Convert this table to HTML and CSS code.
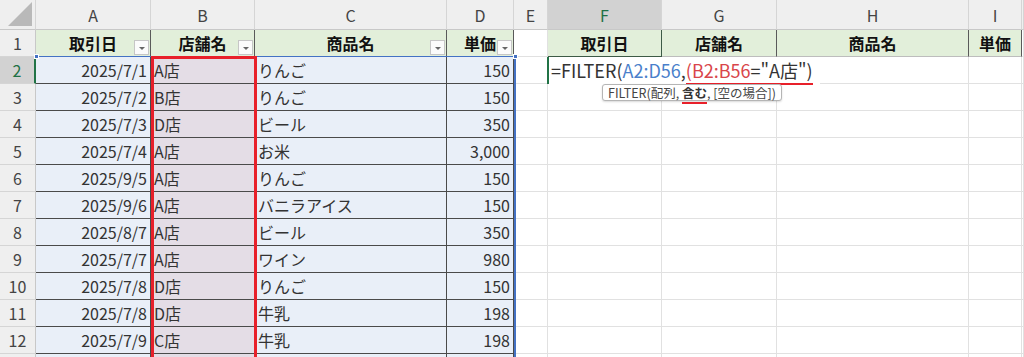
FILE: index.html
```html
<!DOCTYPE html>
<html lang="ja">
<head>
<meta charset="utf-8">
<link rel="stylesheet" href="styles.css">
</head>
<body>
<div class="sheet">
<table class="grid">
<colgroup>
<col class="c-rh"><col class="c-a"><col class="c-b"><col class="c-c"><col class="c-d"><col class="c-e"><col class="c-f"><col class="c-g"><col class="c-h"><col class="c-i"><col class="c-j">
</colgroup>
<tr class="colhead">
<td class="corner"><span class="tri"></span></td><td>A</td><td>B</td><td>C</td><td>D</td><td>E</td><td class="sel">F</td><td>G</td><td>H</td><td>I</td><td></td>
</tr>
<tr>
<td class="rh">1</td>
<td class="th">取引日<span class="dd"></span></td>
<td class="th">店舗名<span class="dd"></span></td>
<td class="th">商品名<span class="dd"></span></td>
<td class="th">単価<span class="dd"></span></td>
<td></td>
<td class="th2 f1">取引日</td><td class="th2">店舗名</td><td class="th2">商品名</td><td class="th2">単価</td><td></td>
</tr>
<tr>
<td class="rh rsel">2</td><td class="d num">2025/7/1</td><td class="d s">A店</td><td class="d">りんご</td><td class="d num">150</td><td></td><td class="nob"></td><td class="nob"></td><td></td><td></td><td></td>
</tr>
<tr>
<td class="rh">3</td><td class="d num">2025/7/2</td><td class="d s">B店</td><td class="d">りんご</td><td class="d num">150</td><td></td><td></td><td></td><td></td><td></td><td></td>
</tr>
<tr>
<td class="rh">4</td><td class="d num">2025/7/3</td><td class="d s">D店</td><td class="d">ビール</td><td class="d num">350</td><td></td><td></td><td></td><td></td><td></td><td></td>
</tr>
<tr>
<td class="rh">5</td><td class="d num">2025/7/4</td><td class="d s">A店</td><td class="d">お米</td><td class="d num">3,000</td><td></td><td></td><td></td><td></td><td></td><td></td>
</tr>
<tr>
<td class="rh">6</td><td class="d num">2025/9/5</td><td class="d s">A店</td><td class="d">りんご</td><td class="d num">150</td><td></td><td></td><td></td><td></td><td></td><td></td>
</tr>
<tr>
<td class="rh">7</td><td class="d num">2025/9/6</td><td class="d s">A店</td><td class="d">バニラアイス</td><td class="d num">150</td><td></td><td></td><td></td><td></td><td></td><td></td>
</tr>
<tr>
<td class="rh">8</td><td class="d num">2025/8/7</td><td class="d s">A店</td><td class="d">ビール</td><td class="d num">350</td><td></td><td></td><td></td><td></td><td></td><td></td>
</tr>
<tr>
<td class="rh">9</td><td class="d num">2025/7/7</td><td class="d s">A店</td><td class="d">ワイン</td><td class="d num">980</td><td></td><td></td><td></td><td></td><td></td><td></td>
</tr>
<tr>
<td class="rh">10</td><td class="d num">2025/7/8</td><td class="d s">D店</td><td class="d">りんご</td><td class="d num">150</td><td></td><td></td><td></td><td></td><td></td><td></td>
</tr>
<tr>
<td class="rh">11</td><td class="d num">2025/7/8</td><td class="d s">D店</td><td class="d">牛乳</td><td class="d num">198</td><td></td><td></td><td></td><td></td><td></td><td></td>
</tr>
<tr>
<td class="rh">12</td><td class="d num">2025/7/9</td><td class="d s">C店</td><td class="d">牛乳</td><td class="d num">198</td><td></td><td></td><td></td><td></td><td></td><td></td>
</tr>
<tr>
<td class="rh"></td><td class="d num"></td><td class="d s"></td><td class="d"></td><td class="d num"></td><td></td><td></td><td></td><td></td><td></td><td></td>
</tr>
</table>

<div class="range-blue"><span class="h h-l"></span><span class="h h-r"></span></div>
<div class="range-red"></div>

<div class="editor"><span class="k">=FILTER(</span><span class="rb">A2:D56</span><span class="k">,</span><span class="ul"><span class="rr">(B2:B56</span><span class="k">=&quot;A店&quot;)</span></span></div>

<div class="tip">FILTER(配列, <b>含む</b>, [空の場合])</div>
</div>
</body>
</html>
```

FILE: styles.css
```css
* { box-sizing: border-box; }
html, body { margin: 0; padding: 0; background: #fff; }
body {
  font-family: "Noto Sans CJK JP", "Noto Sans", sans-serif;
  color: #333;
  overflow: hidden;
}
.sheet { position: relative; width: 1024px; height: 357px; overflow: hidden; }

.grid {
  border-collapse: separate;
  border-spacing: 0;
  table-layout: fixed;
  width: 1024px;
}
.c-rh { width: 36px; }
.c-a { width: 115px; }
.c-b { width: 104px; }
.c-c { width: 192px; }
.c-d { width: 67px; }
.c-e { width: 34px; }
.c-f { width: 114px; }
.c-g { width: 115px; }
.c-h { width: 192px; }
.c-i { width: 53px; }
.c-j { width: 2px; }

.grid td {
  height: 27px;
  padding: 0 3px;
  border-right: 1px solid #e1e1e1;
  border-bottom: 1px solid #e1e1e1;
  font-size: 16px;
  line-height: 20px;
  white-space: nowrap;
  overflow: hidden;
  position: relative;
}

.colhead td {
  height: 30px;
  background: #efefef;
  text-align: center;
  color: #444;
  border-right: 1px solid #d5d5d5;
  border-bottom: 1px solid #c8c8c8;
}
.colhead td.sel { background: #d2d2d2; color: #1e7145; }
.corner .tri {
  position: absolute;
  right: 3px; bottom: 3px;
  width: 0; height: 0;
  border-left: 24px solid transparent;
  border-bottom: 24px solid #b9b9b9;
}

.grid td.rh {
  background: #efefef;
  text-align: center;
  color: #444;
  border-right: 1px solid #c8c8c8;
  border-bottom: 1px solid #d5d5d5;
}
.grid td.rsel {
  background: #d2d2d2;
  color: #1e7145;
  border-right: 2px solid #217346;
}

.grid td.th {
  background: #e2efda;
  font-weight: bold;
  color: #111;
  text-align: center;
  border-right: 1px solid #5a5a5a;
  border-bottom: 1px solid #5a5a5a;
}
.grid td.th2 {
  background: #e2efda;
  font-weight: bold;
  color: #111;
  text-align: center;
  border-right: 1px solid #5a5a5a;
  border-bottom: 1px solid #bdbdbd;
}
.grid td.f1 { border-right: 1px solid #3d5a46; border-bottom: 1px solid #3d5a46; }

.dd {
  position: absolute;
  right: 1px; bottom: 1px;
  width: 15px; height: 15px;
  background: #fbfbfb;
  border: 1px solid #c6c6c6;
}
.dd::after {
  content: "";
  position: absolute;
  left: 4px; top: 6px;
  border-left: 3px solid transparent;
  border-right: 3px solid transparent;
  border-top: 3px solid #666;
}

.grid td.d {
  background: #e9eff8;
  color: #333;
  border-right: 1px solid #4a4a4a;
  border-bottom: 1px solid #4a4a4a;
}
.grid td.s { background: #e4dde6; }
.grid td.num { text-align: right; }
.grid td.nob { border-right-color: transparent; }

.range-blue {
  position: absolute;
  left: 36px; top: 56px;
  width: 480px; height: 310px;
  border-top: 1px solid #4472c4;
  border-right: 2px solid #4472c4;
}
.range-blue .h {
  position: absolute;
  top: -3px;
  width: 5px; height: 5px;
  background: #4472c4;
  border: 1px solid #fff;
}
.range-blue .h-l { left: -2px; }
.range-blue .h-r { right: -4px; }

.range-red {
  position: absolute;
  left: 151px; top: 56px;
  width: 106px; height: 310px;
  border: 3px solid #e8202a;
}

.editor {
  position: absolute;
  left: 547px; top: 57px;
  width: 273px; height: 27px;
  background: #fff;
  border-left: 2px solid #217346;
  padding-left: 2px;
  font-size: 18px;
  line-height: 27px;
  white-space: nowrap;
  color: #333;
}
.editor .rb { color: #4a7fcb; }
.editor .rr { color: #d9454a; }
.editor .ul { border-bottom: 2px solid #e8202a; padding-bottom: 0; }

.tip {
  position: absolute;
  left: 602px; top: 84px;
  height: 17px;
  padding: 0 5px;
  background: #fff;
  border: 1px solid #b5b5b5;
  border-radius: 3px;
  box-shadow: 0 1px 2px rgba(0,0,0,0.15);
  font-size: 12.5px;
  line-height: 15px;
  color: #444;
  white-space: nowrap;
}
.tip b { font-weight: bold; color: #333; border-bottom: 2px solid #e8202a; }
```
